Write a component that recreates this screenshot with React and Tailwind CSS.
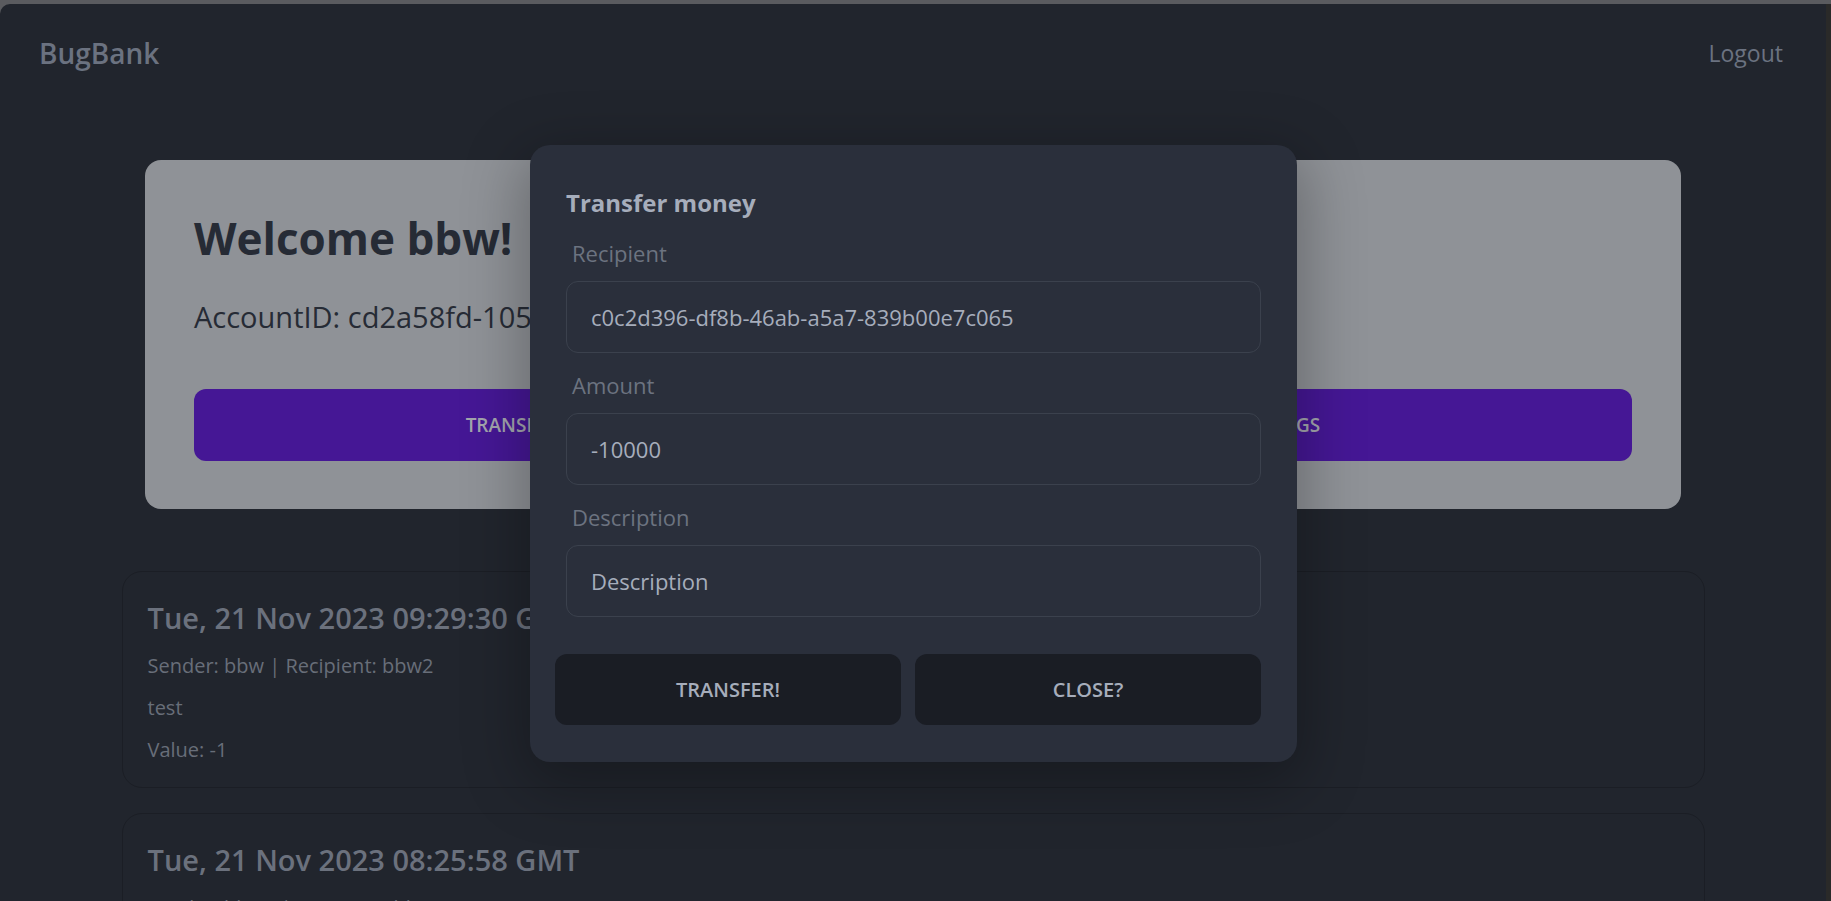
import React from "react";

const font = { fontFamily: '"Open Sans", "Noto Sans", sans-serif' };

function TxCard({ date, sender, desc, value }) {
  return (
    <div className="mx-auto w-[1583px] rounded-[20px] border border-[#1b1e25] pl-[25px] pt-[28px] pb-[23px]">
      <div className="text-[29px] leading-[36px] font-semibold text-[#6b717d]">{date}</div>
      <div className="mt-[16px] text-[20px] leading-[28px] text-[#686e79]">{sender}</div>
      <div className="mt-[14px] text-[20px] leading-[28px] text-[#686e79]">{desc}</div>
      <div className="mt-[14px] text-[20px] leading-[28px] text-[#686e79]">{value}</div>
    </div>
  );
}

function Field({ label, value, first }) {
  return (
    <>
      <div className={`${first ? "mt-[19px]" : "mt-[17px]"} h-[30px] pl-[6px] text-[22px] leading-[30px] text-[#6c7380]`}>
        {label}
      </div>
      <div className="mt-[13px] flex h-[72px] items-center rounded-[12px] border border-[#3b414d] bg-[#2a2f3b] pl-[24px] text-[22px] text-[#a6adbb]">
        {value}
      </div>
    </>
  );
}

export default function App() {
  return (
    <div className="flex h-[901px] w-full overflow-hidden bg-[#5a5b5f] pt-[4px]" style={font}>
      <div className="relative flex-1 overflow-hidden rounded-tl-[10px] bg-[#21252d]">
        {/* navbar */}
        <div className="flex h-[98px] items-center justify-between pl-[39px] pr-[43px]">
          <div className="text-[28px] font-semibold text-[#6b7280]">BugBank</div>
          <div className="text-[23px] text-[#6b7280]">Logout</div>
        </div>

        {/* welcome card */}
        <div className="mx-auto mt-[58px] w-[1536px] rounded-[16px] bg-[#8f9297] px-[49px] pt-[52px] pb-[48px]">
          <div className="text-[44px] leading-[52px] font-bold text-[#262b35]">Welcome bbw!</div>
          <div className="mt-[35px] text-[29px] leading-[36px] text-[#262b35]">
            AccountID: cd2a58fd-1050-4b7e-9c1f-2d5a3e8b4c21
          </div>
          <div className="mt-[54px] grid grid-cols-2 gap-[16px]">
            <button className="flex h-[72px] items-center justify-center rounded-[12px] bg-[#451795] text-[19px] font-semibold text-[#a3a5ad]">
              TRANSFER MONEY
            </button>
            <button className="flex h-[72px] items-center justify-center rounded-[12px] bg-[#451795] text-[19px] font-semibold text-[#a3a5ad]">
              SETTINGS
            </button>
          </div>
        </div>

        {/* transactions */}
        <div className="mt-[62px] flex flex-col gap-[25px]">
          <TxCard
            date="Tue, 21 Nov 2023 09:29:30 GMT"
            sender="Sender: bbw | Recipient: bbw2"
            desc="test"
            value="Value: -1"
          />
          <TxCard
            date="Tue, 21 Nov 2023 08:25:58 GMT"
            sender="Sender: bbw2 | Recipient: bbw"
            desc="test"
            value="Value: 1"
          />
        </div>

        {/* modal */}
        <div className="absolute left-[530px] top-[141px] w-[767px] rounded-[20px] bg-[#2a2f3b] px-[36px] pt-[42px] pb-[37px] shadow-[0_16px_60px_8px_rgba(0,0,0,0.28)]">
          <div className="text-[24px] leading-[32px] font-bold text-[#a6adbb]">Transfer money</div>
          <Field label="Recipient" value="c0c2d396-df8b-46ab-a5a7-839b00e7c065" first />
          <Field label="Amount" value="-10000" />
          <Field label="Description" value="Description" />
          <div className="mt-[37px] -ml-[11px] grid grid-cols-2 gap-[14px]">
            <button className="flex h-[71px] items-center justify-center rounded-[12px] bg-[#1a1d24] text-[20px] font-semibold text-[#a6adbb]">
              TRANSFER!
            </button>
            <button className="flex h-[71px] items-center justify-center rounded-[12px] bg-[#1a1d24] text-[20px] font-semibold text-[#a6adbb]">
              CLOSE?
            </button>
          </div>
        </div>
      </div>
      <div className="w-[5px] bg-[#2a2a29]" />
    </div>
  );
}
